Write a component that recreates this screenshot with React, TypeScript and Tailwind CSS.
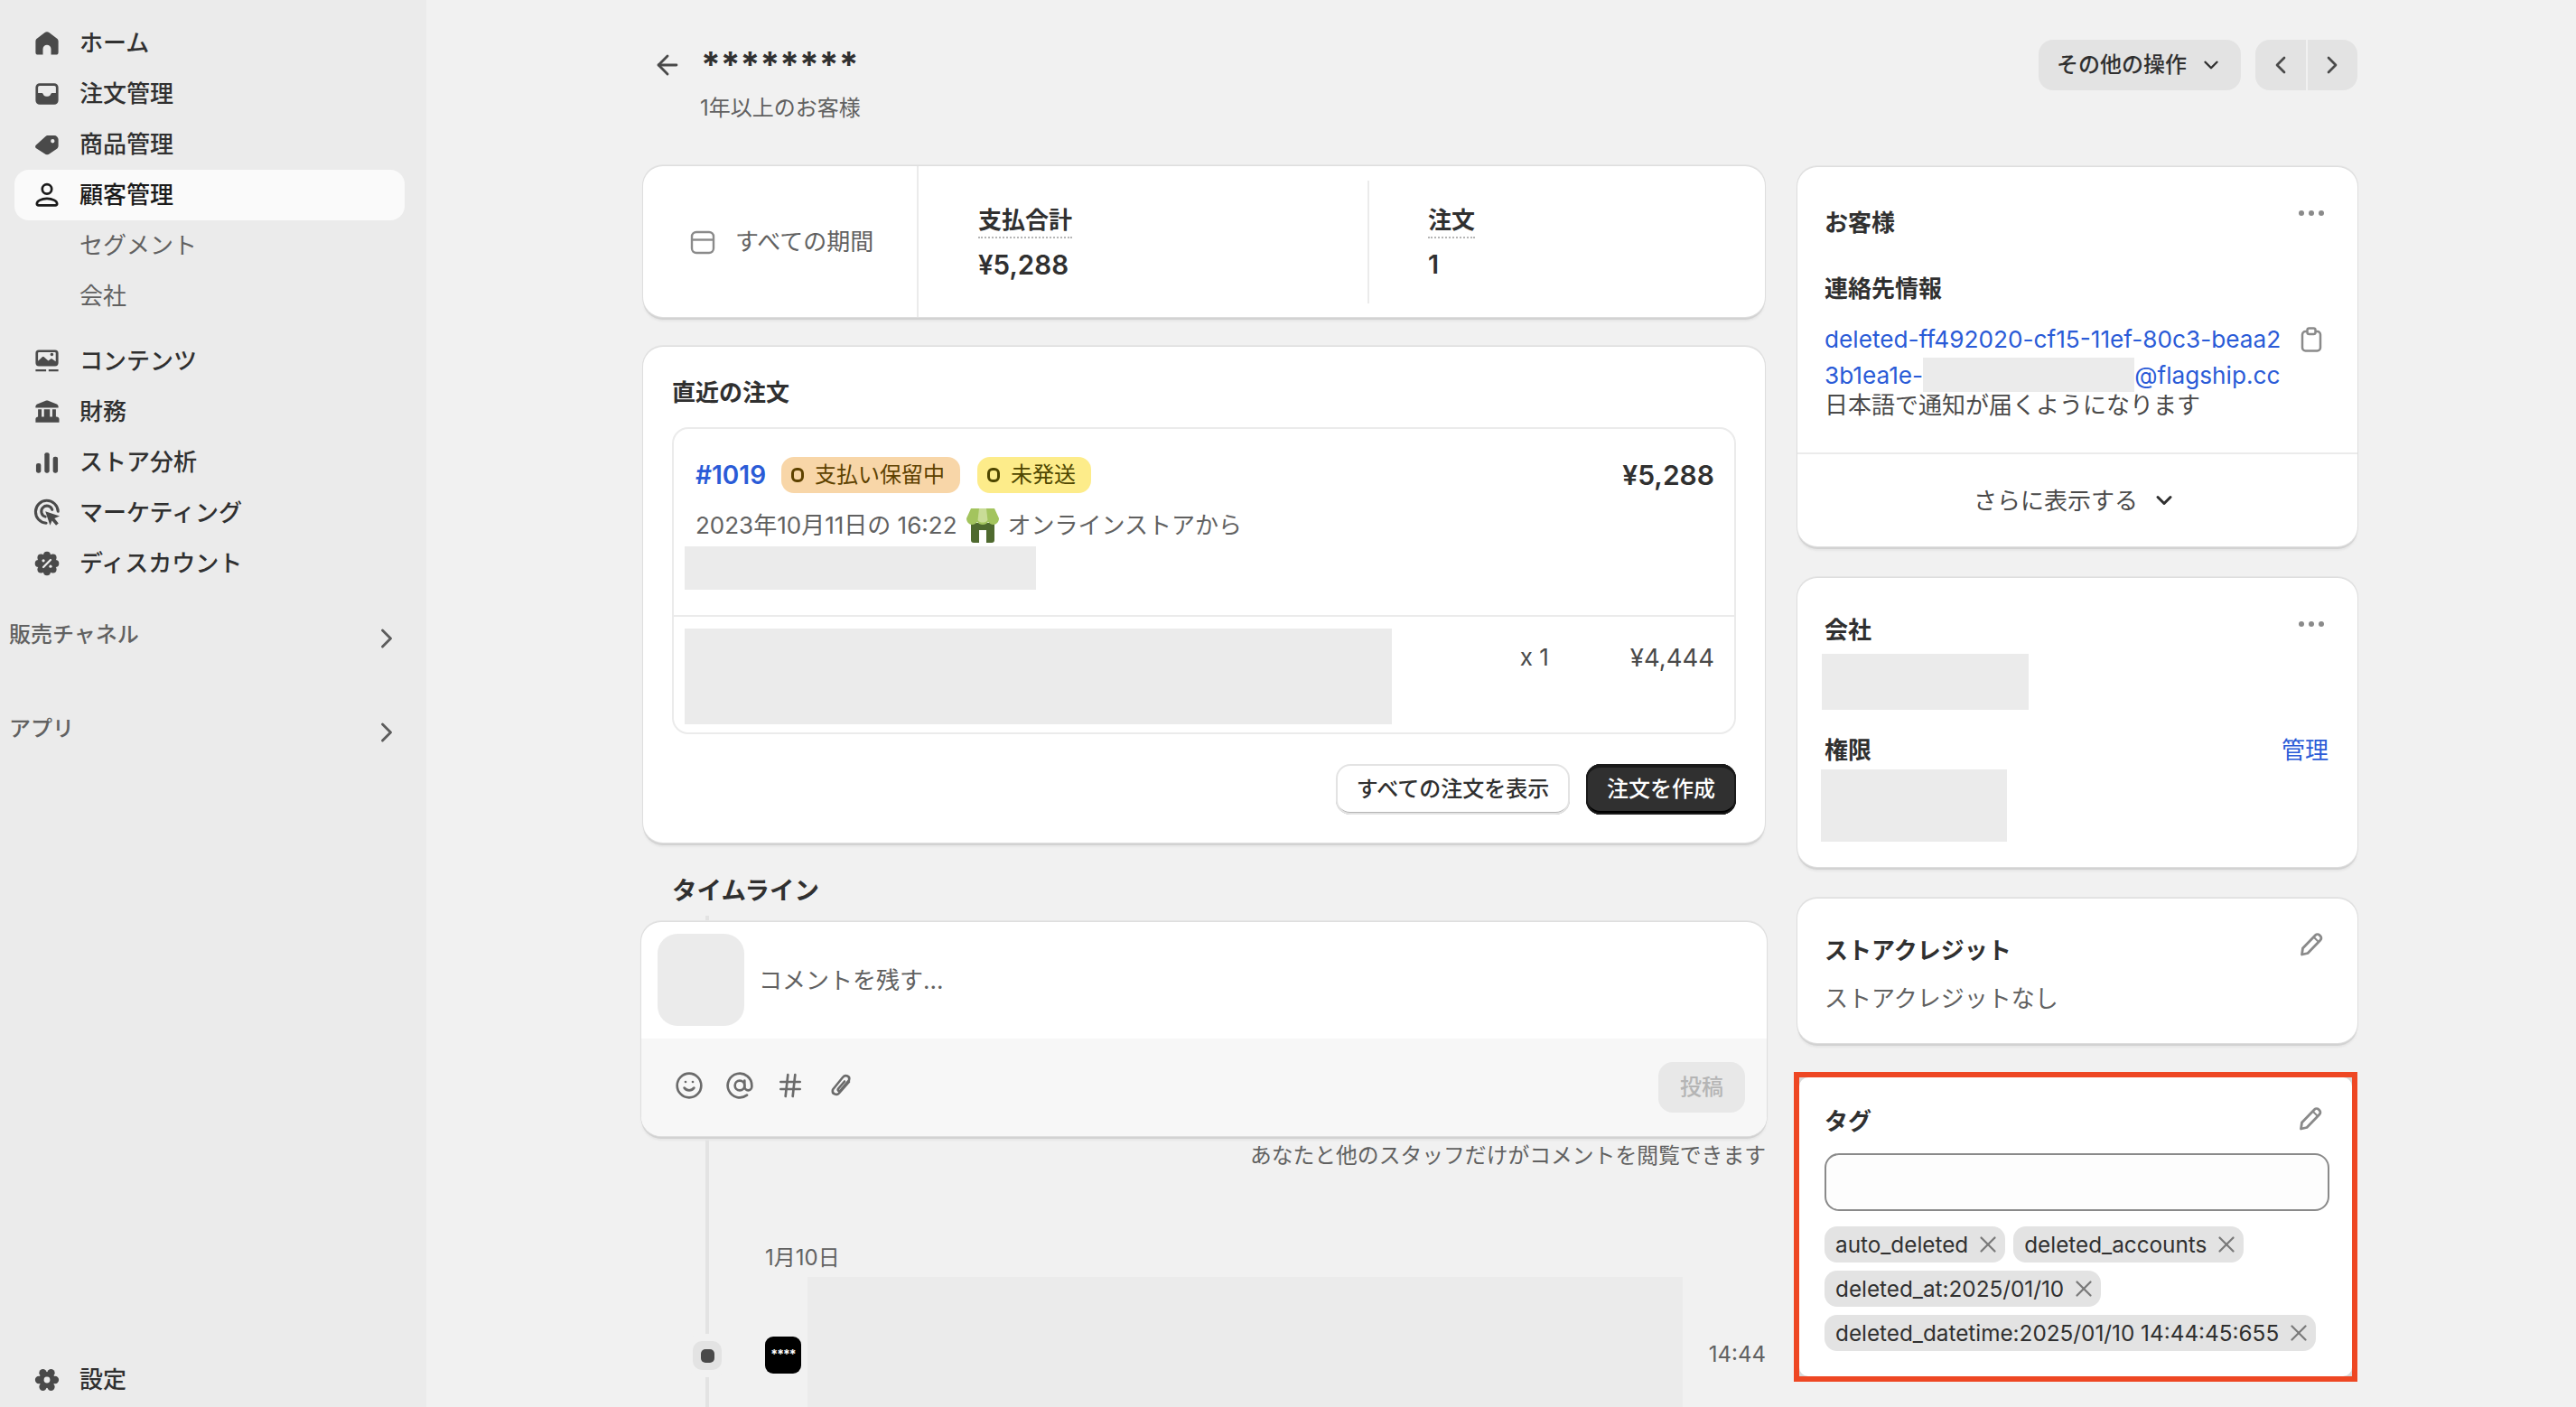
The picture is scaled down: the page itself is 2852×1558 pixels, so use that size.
import React from "react";
import { ArrowLeft, AtSign, ChevronDown, ChevronLeft, ChevronRight, Hash, Smile, X } from "lucide-react";

const Svg = ({ className = "", children }: { className?: string; children: React.ReactNode }) => (
  <svg viewBox="0 0 20 20" fill="currentColor" className={"w-[36px] h-[36px] shrink-0 " + className}>{children}</svg>
);
const HomeIcon = () => (
  <Svg><path d="M3 8.800c0-.7.3-1.300.8-1.700l4.700-3.600a2.500 2.500 0 0 1 3 0L16.200 7.100c.5.4.8 1 .8 1.700v6.700a1.500 1.500 0 0 1-1.500 1.500h-3v-3.500a2.500 2.500 0 0 0-5 0V17h-3A1.500 1.500 0 0 1 3 15.500Z" /></Svg>
);
const InboxIcon = () => (
  <Svg><path fillRule="evenodd" d="M5.500 3.500h9A2.500 2.500 0 0 1 17 6v8a2.500 2.500 0 0 1-2.500 2.500h-9A2.500 2.500 0 0 1 3 14V6a2.500 2.500 0 0 1 2.500-2.500ZM4.500 6v3.500h2.200c.5 0 .9.3 1 .8.2.7.9 1.200 1.800 1.200h1c.9 0 1.600-.5 1.800-1.200.1-.5.5-.8 1-.8h2.200V6a1 1 0 0 0-1-1h-9a1 1 0 0 0-1 1Z" /></Svg>
);
const TagIcon = () => (
  <Svg><path fillRule="evenodd" d="M3.200 10.400 9 5.200c.5-.4 1-.7 1.700-.7h3.800A2.500 2.500 0 0 1 17 7v3.800c0 .6-.2 1.200-.7 1.700l-4.700 3.200c-.9.7-2.200.7-3 0l-5.400-3.500c-.5-.5-.5-1.300 0-1.800ZM13.500 9.100a1.200 1.200 0 1 0 0-2.400 1.200 1.200 0 0 0 0 2.400Z" /></Svg>
);
const PersonIcon = () => (
  <Svg>
    <circle cx="10" cy="6.300" r="2.900" fill="none" stroke="currentColor" strokeWidth="1.500" />
    <path d="M3.800 15.300c0-1.700 2.800-3.100 6.200-3.100s6.200 1.400 6.200 3.100c0 .6-.4 1-1 1H4.800c-.6 0-1-.4-1-1Z" fill="none" stroke="currentColor" strokeWidth="1.500" />
  </Svg>
);
const ContentIcon = () => (
  <Svg>
    <path fillRule="evenodd" d="M5 3h10a2 2 0 0 1 2 2v6a2 2 0 0 1-2 2H5a2 2 0 0 1-2-2V5a2 2 0 0 1 2-2Zm-.5 6.800 2.500-2.300c.4-.3.9-.3 1.300 0l2.500 2.200 1.300-1c.4-.3.9-.3 1.300 0l2 1.500V5a.5.5 0 0 0-.5-.5H5a.5.5 0 0 0-.5.5Zm8.500-3a1 1 0 1 0 0-2 1 1 0 0 0 0 2Z" />
    <path d="M3 15h6.500v1.300H3ZM11 15h6v1.300h-6Z" />
  </Svg>
);
const BankIcon = () => (
  <Svg>
    <path d="M9.200 3.200c.5-.2 1.100-.2 1.600 0l5.200 2.100c.6.300 1 .9 1 1.500v.7H3v-.7c0-.6.4-1.200 1-1.500Z" />
    <path fillRule="evenodd" d="M4.500 8.500h2.200v4.500h1.500V8.500h3.600v4.500h1.500V8.500h2.200V13h.5c.8 0 1.500.6 1.500 1.500v2H3v-2c0-.9.7-1.500 1.500-1.500Z" />
  </Svg>
);
const ChartIcon = () => (
  <Svg>
    <rect x="3.300" y="10.500" width="3" height="6" rx="1.200" />
    <rect x="8.500" y="4" width="3" height="12.500" rx="1.200" />
    <rect x="13.700" y="6.500" width="3" height="10" rx="1.200" />
  </Svg>
);
const TargetIcon = () => (
  <Svg>
    <path d="M9.500 16.200A6.900 6.900 0 1 1 16.800 9" fill="none" stroke="currentColor" strokeWidth="1.700" strokeLinecap="round" />
    <path d="M9 12.300A3.400 3.400 0 1 1 13.200 8" fill="none" stroke="currentColor" strokeWidth="1.700" strokeLinecap="round" />
    <path d="m9 9 8.800 3-3.200 1.400 2.500 3-1.500 1.300-2.500-3-1.200 2.900Z" />
  </Svg>
);
const DiscountIcon = () => (
  <Svg>
    <circle cx="10" cy="10" r="5.500" />
    {[0, 45, 90, 135, 180, 225, 270, 315].map((a) => (
      <circle key={a} cx={10 + 5.2 * Math.cos((a * Math.PI) / 180)} cy={10 + 5.2 * Math.sin((a * Math.PI) / 180)} r="2.200" />
    ))}
    <path d="m7.800 12.200 4.400-4.400" stroke="#ebebeb" strokeWidth="1.300" strokeLinecap="round" />
    <circle cx="7.800" cy="8.200" r=".9" fill="#ebebeb" />
    <circle cx="12.200" cy="11.800" r=".9" fill="#ebebeb" />
  </Svg>
);
const GearIcon = () => (
  <Svg>
    <circle cx="10" cy="10" r="5" />
    {[0, 60, 120, 180, 240, 300].map((a) => (
      <circle key={a} cx={10 + 5 * Math.cos((a * Math.PI) / 180)} cy={10 + 5 * Math.sin((a * Math.PI) / 180)} r="2.300" />
    ))}
    <circle cx="10" cy="10" r="1.900" fill="#ebebeb" />
  </Svg>
);
const Pencil = () => (
  <svg viewBox="0 0 28 28" className="w-[28px] h-[28px] text-[#8a8a8a]" fill="none" stroke="currentColor" strokeWidth="2.800" strokeLinejoin="round">
    <path d="M3.500 25 4.500 18 18.500 3.500a3.200 3.200 0 0 1 4.500 0l1 1a3.200 3.200 0 0 1 0 4.500L10 23.500Z" />
    <path d="m16.500 5.500 6 6" strokeWidth="2" />
  </svg>
);
const Clipboard = () => (
  <svg viewBox="0 0 24 28" className="w-[24px] h-[28px] text-[#8a8a8a]" fill="none" stroke="currentColor" strokeWidth="2.500">
    <rect x="2" y="5" width="20" height="21.500" rx="3.500" />
    <rect x="7.500" y="1.500" width="9" height="6.500" rx="2" fill="#fff" />
  </svg>
);
const Clip = () => (
  <svg viewBox="0 0 30 30" className="w-[30px] h-[30px] ml-[25px] mb-[4px] text-[#6b6b6b]" fill="none" stroke="currentColor" strokeWidth="2.600" strokeLinecap="round">
    <path d="M24 11 13 23.500c-2.500 2.800-8.500 1-7-4L17 6c3-3.500 8.500-1.500 7 3L14.500 20.500c-1.500 1.500-3.500.2-2.500-1.800L19 10.500" />
  </svg>
);
const Dots = () => (
  <div className="flex gap-[5px]">
    <span className="w-[6px] h-[6px] rounded-full bg-[#8a8a8a]" />
    <span className="w-[6px] h-[6px] rounded-full bg-[#8a8a8a]" />
    <span className="w-[6px] h-[6px] rounded-full bg-[#8a8a8a]" />
  </div>
);
const StoreIcon = () => (
  <svg viewBox="0 0 36 38" className="w-[36px] h-[38px] shrink-0">
    <path d="M5 16h26v19a3 3 0 0 1-3 3h-6V24h-8v14H8a3 3 0 0 1-3-3Z" fill="#4f6a2f" />
    <path d="M5 0h26l5 11c0 4-3 7-6 7s-4.500-1.500-6-3c-1.500 2-3.500 3-6 3s-4.500-1-6-3c-1.500 1.500-3 3-6 3s-6-3-6-7Z" fill="#a3c45e" />
    <path d="M14 0h8l1.500 13c-1.500 2-3 2.500-5.500 2.500s-4-.5-5.500-2.500Z" fill="#c9dc97" />
  </svg>
);

const NavRow = ({ icon, label, active }: { icon: React.ReactNode; label: string; active?: boolean }) => (
  <div className={"h-[56px] ml-[16px] mr-[24px] pl-[18px] pr-[18px] flex items-center gap-[18px] rounded-[16px] " + (active ? "bg-[#fafafa] text-[#1a1a1a]" : "text-[#4a4a4a]")}>
    {icon}
    <span className={"text-[26px] leading-[36px] font-medium " + (active ? "text-[#1a1a1a]" : "text-[#303030]")}>{label}</span>
  </div>
);
const SubRow = ({ label }: { label: string }) => (
  <div className="h-[56px] pl-[88px] flex items-center text-[26px] leading-[36px] text-[#616161]">{label}</div>
);
const SectionRow = ({ label, className }: { label: string; className: string }) => (
  <div className={"relative flex items-center pl-[10px] h-[36px] " + className}>
    <span className="text-[24px] leading-[36px] font-medium text-[#616161]">{label}</span>
    <ChevronRight className="w-[36px] h-[36px] ml-auto mr-[26px] mt-[8px] text-[#5c5c5c]" strokeWidth={1.900} />
  </div>
);
const Card = ({ className = "", children }: { className?: string; children: React.ReactNode }) => (
  <div className={"bg-white rounded-[22px] shadow-[0_0_0_1px_#dedede,0_-1px_0_1px_#e6e6e6,0_3px_0_0_#d2d2d2,0_5px_2px_0_#e6e6e6] " + className}>{children}</div>
);
const Badge = ({ label, bg, fg, width }: { label: string; bg: string; fg: string; width: string }) => (
  <span className={"h-[40px] rounded-[14px] flex items-center pl-[11px] gap-[12px] text-[24px] leading-[40px] " + bg + " " + fg + " " + width}>
    <span className="w-[14px] h-[16px] rounded-[6px] border-[3px] border-current shrink-0" />
    {label}
  </span>
);
const TagPill = ({ label }: { label: string }) => (
  <span className="h-[40px] rounded-[14px] bg-[#e3e3e3] flex items-center pl-[12px] pr-[4px] gap-[7px] text-[24.300px] leading-[40px] text-[#303030] whitespace-nowrap">
    {label}
    <X className="w-[30px] h-[30px] text-[#7a7a7a]" strokeWidth={1.800} />
  </span>
);
const Mask = ({ className }: { className: string }) => <div className={"bg-[#ebebeb] " + className} />;

export default function App() {
  return (
    <div className="h-screen w-full overflow-hidden flex bg-[#f1f1f1] text-[#303030] [font-family:Inter,'Noto_Sans_CJK_JP',sans-serif]">
      <aside className="w-[472px] shrink-0 h-full bg-[#ebebeb] flex flex-col pt-[20px] pb-[2px]">
        <NavRow icon={<HomeIcon />} label="ホーム" />
        <NavRow icon={<InboxIcon />} label="注文管理" />
        <NavRow icon={<TagIcon />} label="商品管理" />
        <NavRow icon={<PersonIcon />} label="顧客管理" active />
        <SubRow label="セグメント" />
        <SubRow label="会社" />
        <div className="h-[16px]" />
        <NavRow icon={<ContentIcon />} label="コンテンツ" />
        <NavRow icon={<BankIcon />} label="財務" />
        <NavRow icon={<ChartIcon />} label="ストア分析" />
        <NavRow icon={<TargetIcon />} label="マーケティング" />
        <NavRow icon={<DiscountIcon />} label="ディスカウント" />
        <SectionRow label="販売チャネル" className="mt-[33px]" />
        <SectionRow label="アプリ" className="mt-[68px]" />
        <div className="mt-auto">
          <NavRow icon={<GearIcon />} label="設定" />
        </div>
      </aside>

      <main className="flex-1 min-w-0 pl-[240px] pr-[242px] pt-[44px] flex flex-col">
        <header className="h-[140px] shrink-0 flex items-start justify-between">
          <div className="flex items-start">
            <ArrowLeft className="w-[34px] h-[34px] mt-[11px] ml-[10px] text-[#4a4a4a]" strokeWidth={2} />
            <div className="ml-[20px]">
              <h1 className="mt-[5px] text-[39px] leading-[46px] font-bold text-[#303030] ">********</h1>
              <p className="mt-[7px] ml-[-1px] text-[24px] leading-[36px] text-[#616161]">1年以上のお客様</p>
            </div>
          </div>
          <div className="flex gap-[16px]">
            <button className="w-[224px] h-[56px] rounded-[16px] bg-[#e3e3e3] flex items-center justify-center gap-[14px] text-[24px] font-medium text-[#303030]">
              その他の操作
              <ChevronDown className="w-[26px] h-[26px]" strokeWidth={2.200} />
            </button>
            <div className="w-[113px] h-[56px] rounded-[16px] bg-[#e3e3e3] flex text-[#4a4a4a]">
              <span className="flex-1 flex items-center justify-center border-r-2 border-[#f1f1f1]"><ChevronLeft className="w-[32px] h-[32px]" strokeWidth={2} /></span>
              <span className="flex-1 flex items-center justify-center"><ChevronRight className="w-[32px] h-[32px]" strokeWidth={2} /></span>
            </div>
          </div>
        </header>

        <div className="flex-1 min-h-0 flex gap-[36px] items-start">
          <div className="w-[1242px] shrink-0 flex flex-col">
            <Card className="h-[167px] flex">
              <div className="w-[305px] border-r-2 border-[#ebebeb] flex items-center pl-[52px] gap-[22px]">
                <svg viewBox="0 0 28 28" className="w-[28px] h-[28px] text-[#8a8a8a]" fill="none" stroke="currentColor" strokeWidth="2.400">
                  <rect x="2" y="3" width="24" height="23" rx="5" />
                  <path d="M2 11.500h24" />
                </svg>
                <span className="text-[26px] leading-[36px] text-[#616161]">すべての期間</span>
              </div>
              <div className="flex-1 flex items-center">
                <div className="w-[499px] h-[136px] border-r-2 border-[#ebebeb] pl-[66px] pt-[26px]">
                  <div className="w-fit text-[26px] leading-[36px] font-semibold border-b-2 border-dotted border-[#b5b5b5] h-[38px]">支払合計</div>
                  <div className="mt-[11px] text-[29.500px] leading-[36px] font-semibold">¥5,288</div>
                </div>
                <div className="flex-1 h-[136px] pl-[65px] pt-[26px]">
                  <div className="w-fit text-[26px] leading-[36px] font-semibold border-b-2 border-dotted border-[#b5b5b5] h-[38px]">注文</div>
                  <div className="mt-[11px] text-[28.500px] leading-[36px] font-semibold">1</div>
                </div>
              </div>
            </Card>

            <Card className="h-[549px] mt-[33px] px-[32px] pt-[33px]">
              <h2 className="text-[26px] leading-[36px] font-semibold">直近の注文</h2>
              <div className="mt-[20px] h-[340px] rounded-[18px] border-2 border-[#ebebeb]">
                <div className="h-[208px] border-b-2 border-[#ebebeb] pt-[31px] pl-[24px] pr-[22px]">
                  <div className="flex items-center">
                    <span className="w-[95px] text-[28px] leading-[40px] font-semibold text-[#2a5bd7]">#1019</span>
                    <Badge label="支払い保留中" bg="bg-[#f8d6a8]" fg="text-[#5e4200]" width="w-[198px]" />
                    <span className="w-[19px]" />
                    <Badge label="未発送" bg="bg-[#fdec8a]" fg="text-[#4f4700]" width="w-[126px]" />
                    <span className="ml-auto text-[30px] leading-[40px] font-semibold">¥5,288</span>
                  </div>
                  <div className="mt-[17px] flex items-center h-[38px] text-[26px] leading-[38px] text-[#616161]">
                    <span>2023年10月11日の 16:22</span>
                    <span className="ml-[10px]"><StoreIcon /></span>
                    <span className="ml-[10px]">オンラインストアから</span>
                  </div>
                  <Mask className="mt-[4px] ml-[-12px] w-[389px] h-[48px]" />
                </div>
                <div className="flex pl-[12px] pr-[22px] pt-[13px]">
                  <Mask className="w-[783px] h-[106px]" />
                  <div className="flex-1 flex justify-end gap-[90px] h-[36px] mt-[14px] text-[27.500px] leading-[36px] text-[#4a4a4a]">
                    <span className="text-[26px]">x 1</span>
                    <span>¥4,444</span>
                  </div>
                </div>
              </div>
              <div className="mt-[33px] flex justify-end gap-[18px]">
                <button className="w-[259px] h-[56px] rounded-[16px] bg-white text-[24px] font-medium shadow-[inset_0_0_0_2px_#e3e3e3,inset_0_-3px_0_0_#b5b5b5]">すべての注文を表示</button>
                <button className="w-[166px] h-[56px] rounded-[16px] bg-[#303030] text-white text-[24px] font-medium shadow-[inset_0_0_0_2px_#1a1a1a,inset_0_-4px_0_0_#000000,inset_0_4px_0_0_#1a1a1a]">注文を作成</button>
              </div>
            </Card>

            <h2 className="mt-[33px] ml-[32px] text-[27.500px] leading-[40px] font-semibold">タイムライン</h2>

            <div className="relative mt-[15px]">
              <div className="absolute left-[69px] top-[-7px] bottom-[-400px] w-[4px] bg-[#e3e3e3]" />
              <Card className="relative ml-[-2px] w-[1246px] overflow-hidden">
                <div className="h-[129px] flex pl-[18px] pt-[13px] gap-[16px]">
                  <div className="w-[96px] h-[102px] rounded-[22px] bg-[#ebebeb]" />
                  <span className="mt-[34px] text-[26px] leading-[36px] text-[#616161]">コメントを残す...</span>
                </div>
                <div className="h-[108px] bg-[#f7f7f7] flex items-center pl-[37px] pr-[24px]">
                  <Smile className="w-[32px] h-[32px] mb-[4px] text-[#6b6b6b]" strokeWidth={2} />
                  <AtSign className="w-[32px] h-[32px] mb-[4px] ml-[24px] text-[#6b6b6b]" strokeWidth={2} />
                  <Hash className="w-[32px] h-[32px] mb-[4px] ml-[24px] text-[#6b6b6b]" strokeWidth={2} />
                  <Clip />
                  <button className="ml-auto w-[96px] h-[56px] rounded-[16px] bg-[#e8e8e8] text-[24px] font-medium text-[#b5b5b5]">投稿</button>
                </div>
              </Card>
              <p className="relative mt-[4px] mr-[-1px] h-[36px] text-right text-[23.800px] leading-[36px] text-[#616161]">あなたと他のスタッフだけがコメントを閲覧できます</p>
              <p className="relative mt-[77px] ml-[135px] text-[24px] leading-[36px] text-[#616161]">1月10日</p>
              <div className="relative mt-[3px] h-[172px] flex items-center pl-[135px]">
                <span className="absolute left-[55px] top-[71px] w-[32px] h-[32px] rounded-[10px] bg-[#e3e3e3] ring-8 ring-[#f1f1f1] flex items-center justify-center">
                  <span className="w-[15px] h-[15px] rounded-[5px] bg-[#4a4a4a]" />
                </span>
                <span className="w-[40px] h-[41px] rounded-[9px] bg-black flex items-center justify-center text-white text-[14px] leading-[14px] font-bold tracking-[-1px] shrink-0">****</span>
                <Mask className="ml-[7px] w-[969px] h-[172px]" />
                <span className="ml-auto mr-[-1px] text-[24px] leading-[36px] text-[#616161]">14:44</span>
              </div>
            </div>
          </div>

          <div className="w-[620px] shrink-0 flex flex-col">
            <Card className="mt-[1px] h-[420px] pt-[44px] flex flex-col">
              <div className="pl-[30px] pr-[37px] flex items-start justify-between h-[36px]">
                <h2 className="text-[26px] leading-[36px] font-semibold">お客様</h2>
                <span className="mt-[4px]"><Dots /></span>
              </div>
              <h3 className="mt-[37px] pl-[30px] text-[26px] leading-[36px] font-semibold">連絡先情報</h3>
              <div className="mt-[20px] pl-[30px] relative">
                <div className="flex items-center h-[36px] justify-between pr-[39px]">
                  <span className="text-[26.200px] leading-[36px] text-[#2a5bd7] whitespace-nowrap">deleted-ff492020-cf15-11ef-80c3-beaa2</span>
                  <Clipboard />
                </div>
                <div className="relative h-[36px] mt-[4px] flex text-[26.200px] leading-[36px] text-[#2a5bd7] whitespace-nowrap">
                  <span>3b1ea1e-</span>
                  <span className="w-[234px] h-[38px] -mt-[2px] bg-[#ebebeb]" />
                  <span>@flagship.cc</span>
                </div>
                <p className="mt-[-3px] text-[26px] leading-[36px] text-[#4a4a4a]">日本語で通知が届くようになります</p>
              </div>
              <div className="mt-[34px] flex-1 border-t-2 border-[#ebebeb] flex items-center justify-center gap-[15px] text-[26px] text-[#4a4a4a]">
                さらに表示する
                <ChevronDown className="w-[28px] h-[28px] mr-[5px] text-[#303030]" strokeWidth={2.600} />
              </div>
            </Card>

            <Card className="mt-[35px] h-[320px] pt-[40px]">
              <div className="pl-[30px] pr-[37px] flex items-start justify-between h-[36px]">
                <h2 className="text-[26px] leading-[36px] font-semibold">会社</h2>
                <span className="mt-[8px]"><Dots /></span>
              </div>
              <Mask className="mt-[8px] ml-[27px] w-[229px] h-[62px]" />
              <div className="mt-[27px] pl-[30px] pr-[32px] flex justify-between h-[36px] text-[26px] leading-[36px]">
                <span className="font-semibold">権限</span>
                <span className="text-[#2a5bd7]">管理</span>
              </div>
              <Mask className="mt-[3px] ml-[26px] w-[206px] h-[80px]" />
            </Card>

            <Card className="mt-[35px] h-[160px] pt-[40px]">
              <div className="pl-[30px] pr-[37px] flex items-start justify-between h-[36px]">
                <h2 className="text-[26px] leading-[36px] font-semibold">ストアクレジット</h2>
                <span className="mt-[-3px]"><Pencil /></span>
              </div>
              <p className="mt-[17px] pl-[30px] text-[26px] leading-[36px] text-[#616161]">ストアクレジットなし</p>
            </Card>

            <div className="mt-[32px] ml-[-4px] w-[624px] h-[343px] border-[6px] border-[#ee4723] bg-[#d9d9d9]">
              <div className="h-full bg-white rounded-[10px] pt-[31px] pl-[28px] pr-[25px]">
                <div className="flex items-start justify-between h-[36px] pr-[7px]">
                  <h2 className="text-[26px] leading-[36px] font-semibold">タグ</h2>
                  <span className="mt-[1px]"><Pencil /></span>
                </div>
                <div className="mt-[17px] h-[64px] rounded-[16px] border-2 border-[#8a8a8a] bg-[#fdfdfd]" />
                <div className="mt-[17px] flex flex-wrap gap-x-[9px] gap-y-[9px]">
                  <TagPill label="auto_deleted" />
                  <TagPill label="deleted_accounts" />
                  <TagPill label="deleted_at:2025/01/10" />
                  <TagPill label="deleted_datetime:2025/01/10 14:44:45:655" />
                </div>
              </div>
            </div>
          </div>
        </div>
      </main>
    </div>
  );
}
